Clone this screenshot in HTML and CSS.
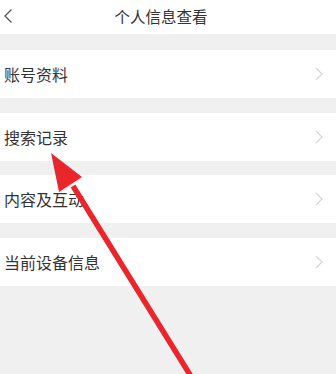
FILE: index.html
```html
<!DOCTYPE html>
<html lang="zh-CN">
<head>
<meta charset="utf-8">
<link rel="stylesheet" href="styles.css">
</head>
<body>
<div class="page">
  <div class="header">
    <span class="back">
      <svg width="10" height="16" viewBox="0 0 10 16"><path d="M8.5 1.5 L2 8 L8.5 14.5" fill="none" stroke="#555" stroke-width="1.3"/></svg>
    </span>
    <span class="title">个人信息查看</span>
  </div>
  <div class="list">
    <div class="row"><span class="label">账号资料</span><svg class="chev" width="8" height="14" viewBox="0 0 8 14"><path d="M1 1 L7 7 L1 13" fill="none" stroke="#d4d4d4" stroke-width="1.1"/></svg></div>
    <div class="row"><span class="label">搜索记录</span><svg class="chev" width="8" height="14" viewBox="0 0 8 14"><path d="M1 1 L7 7 L1 13" fill="none" stroke="#d4d4d4" stroke-width="1.1"/></svg></div>
    <div class="row"><span class="label">内容及互动</span><svg class="chev" width="8" height="14" viewBox="0 0 8 14"><path d="M1 1 L7 7 L1 13" fill="none" stroke="#d4d4d4" stroke-width="1.1"/></svg></div>
    <div class="row"><span class="label">当前设备信息</span><svg class="chev" width="8" height="14" viewBox="0 0 8 14"><path d="M1 1 L7 7 L1 13" fill="none" stroke="#d4d4d4" stroke-width="1.1"/></svg></div>
  </div>
  <svg class="arrow" width="336" height="374" viewBox="0 0 336 374">
    <line x1="73" y1="186" x2="192" y2="378" stroke="#e8262b" stroke-width="5.5"/>
    <polygon points="51,153 82,177 59,192" fill="#e8262b"/>
  </svg>
</div>
</body>
</html>
```
FILE: styles.css
```css
html, body {
  margin: 0;
  padding: 0;
  background: #f0f0f0;
}
.page {
  position: relative;
  width: 336px;
  height: 374px;
  overflow: hidden;
  background: #f0f0f0;
  font-family: "Noto Sans CJK SC", "Noto Sans", sans-serif;
  color: #333;
}
.header {
  height: 34px;
  background: #fff;
  display: flex;
  align-items: center;
  padding-right: 37px;
}
.back {
  width: 20px;
  margin-left: 3px;
  display: flex;
  align-items: center;
  margin-top: -3px;
}
.title {
  flex: 1;
  text-align: center;
  font-size: 15.5px;
  color: #333;
  margin-top: -3px;
}
.list {
  display: flex;
  flex-direction: column;
  gap: 14.5px;
  padding-top: 16px;
}
.row {
  height: 48px;
  background: #fff;
  display: flex;
  align-items: center;
  justify-content: space-between;
  padding: 0 13px 0 4px;
}
.label {
  font-size: 16px;
  color: #333;
}
.arrow {
  position: absolute;
  left: 0;
  top: 0;
  pointer-events: none;
}
```
